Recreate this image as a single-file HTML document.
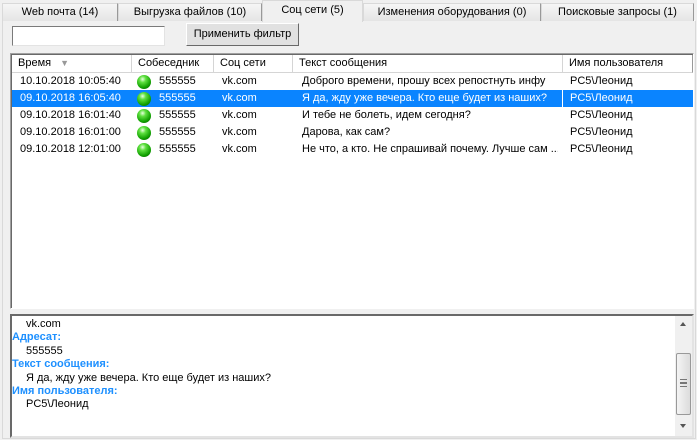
<!DOCTYPE html>
<html><head><meta charset="utf-8"><style>
*{box-sizing:border-box;margin:0;padding:0}
body{width:697px;height:440px;background:#f0f0f0;font-family:"Liberation Sans",sans-serif;font-size:11px;color:#000;position:relative;overflow:hidden}
.a{position:absolute}
.tab{position:absolute;top:3px;height:18px;border:1px solid #d9d9d9;border-bottom:none;background:linear-gradient(#f6f6f6,#e5e5e5);text-align:center;line-height:16px;border-right-color:#999}
.tab.sel{top:0;height:22px;background:#f0f0f0;border-color:#d9d9d9;line-height:18px}
.hd{position:absolute;top:0;height:18px;border-right:1px solid #d5d5d5;border-bottom:1px solid #d5d5d5;background:#fff;line-height:17px;padding-left:6px}
.row{position:absolute;left:0;width:681px;height:17px;line-height:16px}
.row span{position:absolute;top:0;white-space:nowrap;overflow:hidden}
.sel2{background:#0a84ff;color:#fff}
.ball{position:absolute;left:125px;top:2px;width:14px;height:14px;border-radius:50%;background:radial-gradient(circle at 40% 30%,#e8ffe0 0,#5fe040 25%,#10a000 65%,#045000 100%)}
.lb{color:#1e90ff;font-weight:bold;padding-left:0}
.vl{padding-left:14px}
</style></head><body>
<div class="a" style="left:2px;top:20px;width:694px;height:419px;border:1px solid #d9d9d9;border-top:1px solid #fff"></div>
<div class="tab" style="left:2px;width:116px">Web почта (14)</div>
<div class="tab" style="left:118px;width:144px">Выгрузка файлов (10)</div>
<div class="tab sel" style="left:262px;width:101px">Соц сети (5)</div>
<div class="tab" style="left:363px;width:178px">Изменения оборудования (0)</div>
<div class="tab" style="left:541px;width:153px">Поисковые запросы (1)</div>

<div class="a" style="left:12px;top:26px;width:153px;height:20px;background:#fff;border:1px solid #7a7a7a;border-right-color:#e3e3e3;border-bottom-color:#e3e3e3"></div>
<div class="a" style="left:186px;top:23px;width:113px;height:23px;background:#e1e1e1;border:1px solid #fff;border-right-color:#696969;border-bottom-color:#696969;text-align:center;line-height:20px">Применить фильтр</div>

<div class="a" style="left:10px;top:53px;width:684px;height:256px;background:#fff;border:1px solid #a0a0a0;border-right-color:#fff;border-bottom-color:#fff;box-shadow:inset 1px 1px 0 #696969">
 <div class="a" style="left:1px;top:1px;width:681px;height:253px;overflow:hidden">
  <div class="hd" style="left:0;width:120px">Время <span style="color:#999;font-size:9px;margin-left:6px">▼</span></div>
  <div class="hd" style="left:120px;width:82px">Собеседник</div>
  <div class="hd" style="left:202px;width:79px">Соц сети</div>
  <div class="hd" style="left:281px;width:270px">Текст сообщения</div>
  <div class="hd" style="left:551px;width:130px;border-right:1px solid #999">Имя пользователя</div>
  <div class="row" style="top:18px"><span style="left:8px">10.10.2018 10:05:40</span><i class="ball"></i><span style="left:147px">555555</span><span style="left:210px">vk.com</span><span style="left:290px;width:255px">Доброго времени, прошу всех репостнуть инфу</span><span style="left:558px">PC5\Леонид</span></div>
  <div class="row sel2" style="top:35px"><span style="left:8px">09.10.2018 16:05:40</span><i class="ball"></i><span style="left:147px">555555</span><span style="left:210px">vk.com</span><span style="left:290px;width:255px">Я да, жду уже вечера. Кто еще будет из наших?</span><span style="left:558px">PC5\Леонид</span><div class="a" style="left:550px;top:0;width:1px;height:17px;background:#fff"></div></div>
  <div class="row" style="top:52px"><span style="left:8px">09.10.2018 16:01:40</span><i class="ball"></i><span style="left:147px">555555</span><span style="left:210px">vk.com</span><span style="left:290px;width:255px">И тебе не болеть, идем сегодня?</span><span style="left:558px">PC5\Леонид</span></div>
  <div class="row" style="top:69px"><span style="left:8px">09.10.2018 16:01:00</span><i class="ball"></i><span style="left:147px">555555</span><span style="left:210px">vk.com</span><span style="left:290px;width:255px">Дарова, как сам?</span><span style="left:558px">PC5\Леонид</span></div>
  <div class="row" style="top:86px"><span style="left:8px">09.10.2018 12:01:00</span><i class="ball"></i><span style="left:147px">555555</span><span style="left:210px">vk.com</span><span style="left:290px;width:256px">Не что, а кто. Не спрашивай почему. Лучше сам ...</span><span style="left:558px">PC5\Леонид</span></div>
 </div>
</div>

<div class="a" style="left:10px;top:314px;width:684px;height:124px;background:#fff;border:2px solid #a0a0a0;border-right-color:#e3e3e3;border-bottom-color:#e3e3e3;border-left-color:#696969;border-top-color:#696969;line-height:13.4px;padding-top:2px">
 <div class="vl">vk.com</div>
 <div class="lb">Адресат:</div>
 <div class="vl">555555</div>
 <div class="lb">Текст сообщения:</div>
 <div class="vl">Я да, жду уже вечера. Кто еще будет из наших?</div>
 <div class="lb">Имя пользователя:</div>
 <div class="vl">PC5\Леонид</div>
 <div class="a" style="right:0;top:0;width:17px;height:120px;background:#f0f0f0">
  <div class="a" style="left:5px;top:6px;width:0;height:0;border:3px solid transparent;border-bottom:4px solid #555;border-top:none"></div>
  <div class="a" style="left:1px;top:37px;width:15px;height:62px;border:1px solid #999;border-radius:2px;background:linear-gradient(90deg,#f4f4f4,#dcdcdc)">
   <div class="a" style="left:3px;top:25px;width:7px;height:8px;border-top:1px solid #777;border-bottom:1px solid #777"></div>
   <div class="a" style="left:3px;top:28px;width:7px;height:2px;border-top:1px solid #777;border-bottom:1px solid #777"></div>
  </div>
  <div class="a" style="left:5px;top:108px;width:0;height:0;border:3px solid transparent;border-top:4px solid #555;border-bottom:none"></div>
 </div>
</div>
</body></html>
